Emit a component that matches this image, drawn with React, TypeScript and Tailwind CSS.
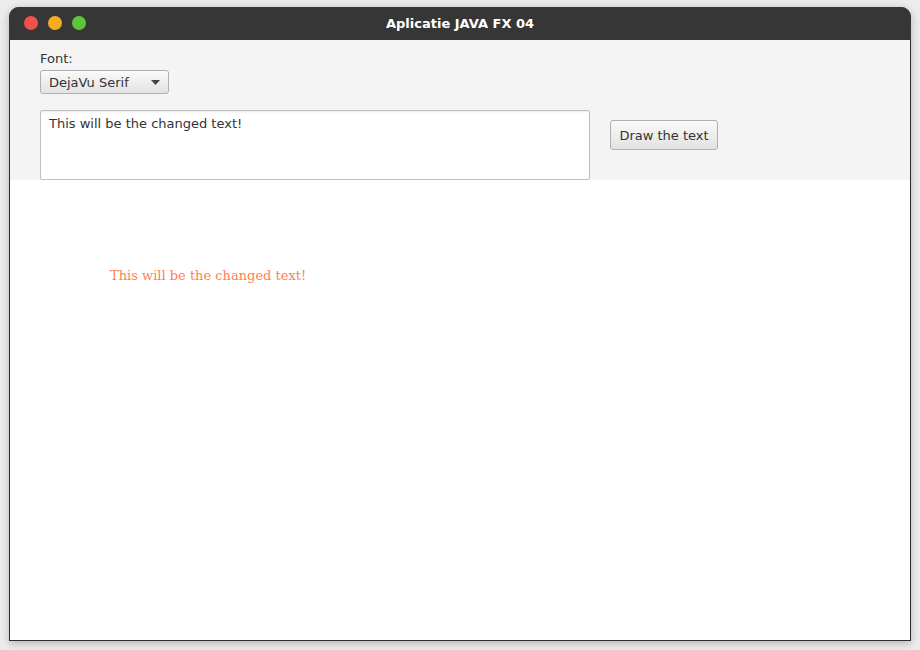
import React from "react";

export default function App() {
  return (
    <div className="w-[920px] h-[650px] bg-[#ececec] pt-[7px] pl-[9px]" style={{ fontFamily: '"DejaVu Sans", sans-serif' }}>
      <div className="w-[902px] h-[634px] flex flex-col rounded-t-[10px] overflow-hidden shadow-[0_2px_8px_rgba(0,0,0,0.25)] bg-[#2e2e2e]">
        <div className="h-[33px] shrink-0 bg-[#363636] relative flex items-center justify-center">
          <div className="absolute left-[15px] top-[9px] flex gap-[10px]">
            <div className="w-[14px] h-[14px] rounded-full bg-[#ee5249]" />
            <div className="w-[14px] h-[14px] rounded-full bg-[#f5ad1f]" />
            <div className="w-[14px] h-[14px] rounded-full bg-[#5bc737]" />
          </div>
          <span className="text-white font-bold text-[13px] leading-none" style={{ fontFamily: '"DejaVu Sans", sans-serif' }}>Aplicatie JAVA FX 04</span>
        </div>
        <div className="flex-1 flex flex-col mx-[1px] mb-[1px] bg-white">
          <div className="h-[140px] shrink-0 bg-[#f4f4f4] pl-[30px] pt-[11px]">
            <div className="text-[13px] leading-[16px] text-[#333333]">Font:</div>
            <div className="mt-[3px] w-[129px] h-[24px] rounded-[3px] border border-[#b0b0b0] bg-gradient-to-b from-[#fafafa] to-[#e2e2e2] flex items-center pl-[8px] pr-[8px] justify-between">
              <span className="text-[13px] text-[#333333] leading-none">DejaVu Serif</span>
              <svg width="9" height="5" viewBox="0 0 9 5"><path d="M0 0 L9 0 L4.5 5 Z" fill="#444" /></svg>
            </div>
            <div className="mt-[16px] flex gap-[20px]">
              <div className="w-[550px] h-[70px] bg-white border border-[#c0c0c0] rounded-[2px] shadow-[inset_0_1px_2px_rgba(0,0,0,0.08)] px-[8px] pt-[5px]">
                <div className="text-[13px] leading-[16px] text-[#333333]">This will be the changed text!</div>
              </div>
              <div className="mt-[10px] w-[108px] h-[30px] rounded-[3px] border border-[#b0b0b0] bg-gradient-to-b from-[#fafafa] to-[#e2e2e2] flex items-center justify-center">
                <span className="text-[13px] text-[#333333] leading-none">Draw the text</span>
              </div>
            </div>
          </div>
          <div className="flex-1 bg-white pl-[100px] pt-[88px]">
            <div className="text-[13px] leading-[16px] text-[#ff7f50]" style={{ fontFamily: '"DejaVu Serif", serif' }}>This will be the changed text!</div>
          </div>
        </div>
      </div>
    </div>
  );
}
